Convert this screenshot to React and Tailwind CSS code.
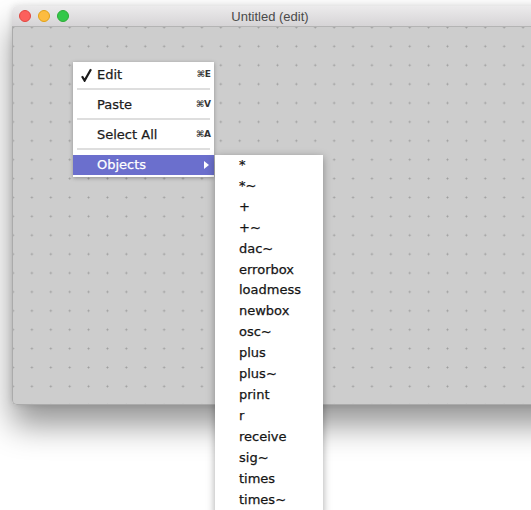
import React from 'react'

const objects = [
  '*', '*~', '+', '+~', 'dac~', 'errorbox', 'loadmess', 'newbox', 'osc~',
  'plus', 'plus~', 'print', 'r', 'receive', 'sig~', 'times', 'times~',
]

function Check() {
  return (
    <svg width="11" height="14" viewBox="0 0 11 14" className="block">
      <path d="M1 8.2 L3.6 12.6 L10 1.2" fill="none" stroke="#1a1a1a" strokeWidth="2.2" strokeLinejoin="miter" />
    </svg>
  )
}

function MenuItem({ label, shortcut, checked }) {
  return (
    <div className="flex h-[20px] items-center pl-[8px] pr-[3px] text-[13px] text-[#1c1c1c] [-webkit-text-stroke:0.25px_#1c1c1c]">
      <div className="w-[16px]">{checked && <Check />}</div>
      <span className="flex-1">{label}</span>
      <span className="text-[9px] font-bold text-[#333] [-webkit-text-stroke:0]">{shortcut}</span>
    </div>
  )
}

function Separator() {
  return (
    <div className="h-[10px] px-[4px] pt-[3px]">
      <div className="h-[1.5px] w-full bg-[#dedede]" />
    </div>
  )
}

export default function App() {
  return (
    <div className="relative h-[510px] w-[531px] overflow-hidden bg-white font-['DejaVu_Sans',sans-serif]">
      {/* patch window */}
      <div className="ml-[12px] mt-[6px] w-[560px] rounded-[5px] shadow-[0_20px_32px_rgba(0,0,0,0.42),0_0_6px_rgba(0,0,0,0.12)]">
        <div className="relative flex h-[21px] items-center gap-[7px] rounded-t-[5px] border-b border-[#b4b4b4] bg-gradient-to-b from-[#ecebec] to-[#d6d4d6] pl-[7px]">
          <div className="h-[12px] w-[12px] rounded-full border border-[#e2463f] bg-[#fc605c]" />
          <div className="h-[12px] w-[12px] rounded-full border border-[#e1a116] bg-[#fdbc40]" />
          <div className="h-[12px] w-[12px] rounded-full border border-[#2dac37] bg-[#34c84a]" />
          <div className="absolute left-0 top-0 w-[516px] text-center font-['Liberation_Sans',sans-serif] text-[13px] leading-[21px] text-[#4a4a4a]">
            Untitled (edit)
          </div>
        </div>
        <div className="h-[378px] rounded-b-[5px] border-b border-l border-[#ababab] bg-[#cdcdcd] bg-[radial-gradient(circle,#9c9c9c_0.8px,transparent_1.2px)] bg-[length:18.9px_18.9px] bg-[position:-9.45px_-9px]" />
      </div>

      {/* popup menu */}
      <div className="absolute left-[73px] top-[62px] w-[141px] bg-white pb-[2px] pt-[3px] shadow-[0_1px_4px_rgba(0,0,0,0.3)]">
        <MenuItem label="Edit" shortcut="⌘E" checked />
        <Separator />
        <MenuItem label="Paste" shortcut="⌘V" />
        <Separator />
        <MenuItem label="Select All" shortcut="⌘A" />
        <Separator />
        <div className="flex h-[20px] items-center bg-[#6b6fcd] pl-[24px] pr-[5px] text-[13px] text-white [-webkit-text-stroke:0.25px_white]">
          <span className="flex-1">Objects</span>
          <svg width="5" height="8" viewBox="0 0 5 8">
            <path d="M0 0 L5 4 L0 8 Z" fill="white" />
          </svg>
        </div>
      </div>

      {/* objects submenu */}
      <div className="absolute left-[215px] top-[155px] w-[108px] bg-white pb-[6px] shadow-[0_2px_8px_rgba(0,0,0,0.35)]">
        {objects.map((name) => (
          <div key={name} className="pl-[24px] text-[13px] leading-[20.9px] text-[#151515] [-webkit-text-stroke:0.25px_#151515]">
            {name}
          </div>
        ))}
      </div>
    </div>
  )
}
